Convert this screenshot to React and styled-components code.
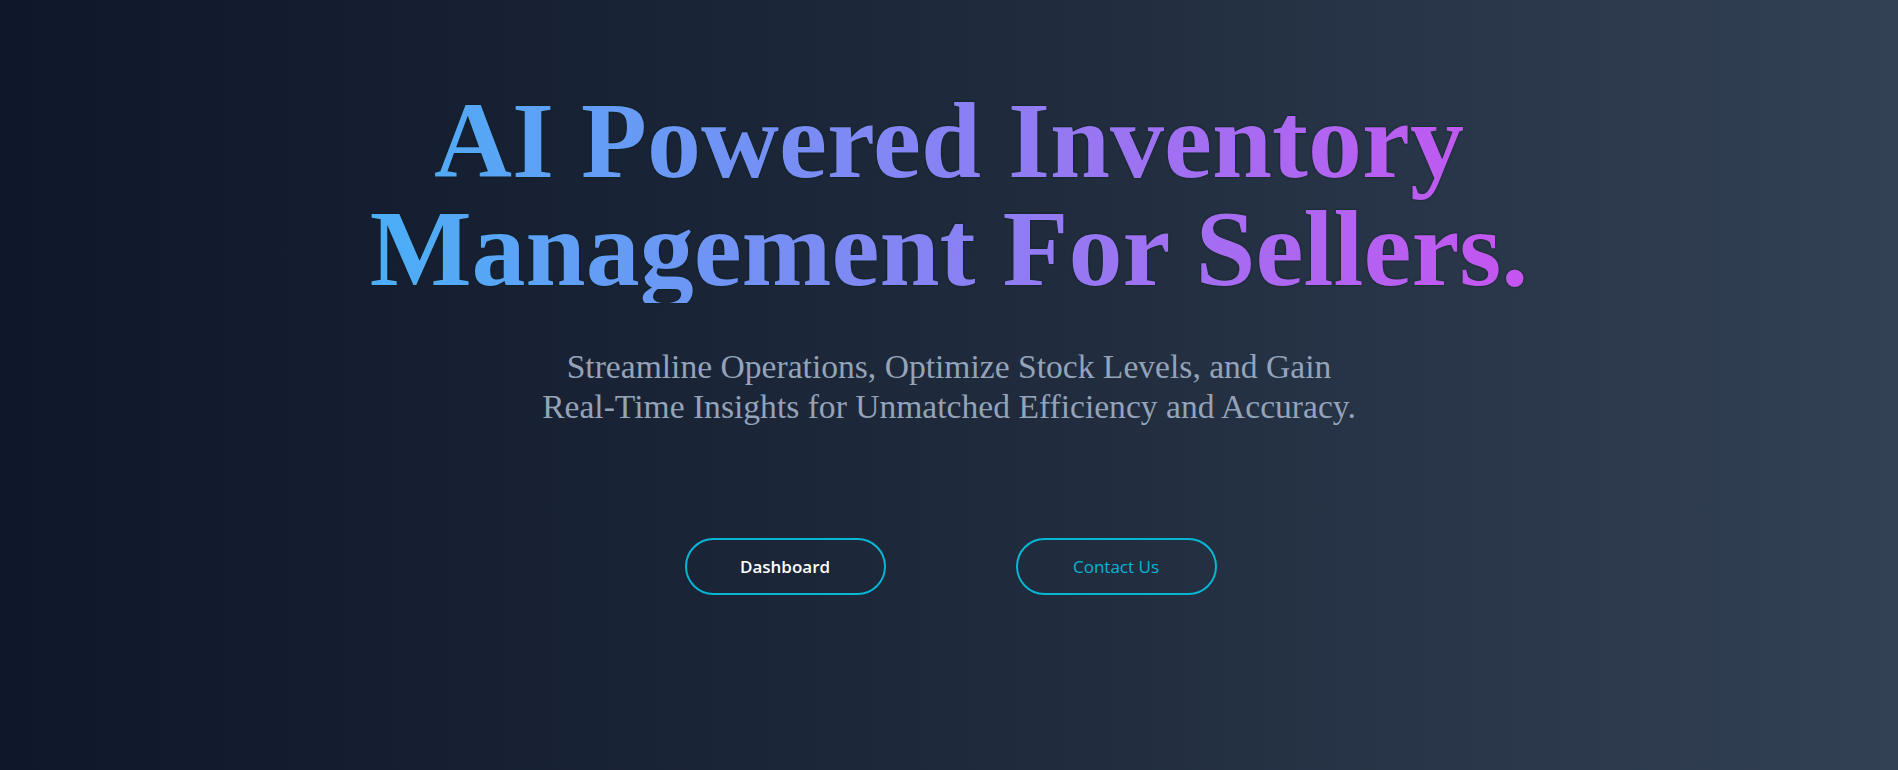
import React from "react";
import styled, { createGlobalStyle } from "styled-components";

const GlobalStyle = createGlobalStyle`
  html, body {
    margin: 0;
    padding: 0;
  }
  body {
    font-family: "Liberation Serif", "Times New Roman", serif;
    background: #0f172a;
  }
  * { box-sizing: border-box; }
`;

const Page = styled.main`
  min-height: 100vh;
  width: 100%;
  background: linear-gradient(to right, #0f172a 0%, #1e293b 50%, #334155 100%);
  display: flex;
  flex-direction: column;
  align-items: center;
  padding-top: 87px;
`;

const Heading = styled.h1`
  margin: 0;
  width: 100%;
  text-align: center;
  font-family: "Liberation Serif", "Times New Roman", serif;
  font-weight: 700;
  font-size: 108px;
  line-height: 1;
  background: linear-gradient(to right, #38bdf8 10%, #d946ef 90%);
  -webkit-background-clip: text;
  background-clip: text;
  color: transparent;
  filter: drop-shadow(0 0 1px rgba(4, 30, 20, 0.85));
`;

const Subtitle = styled.p`
  margin: 44px 0 0;
  text-align: center;
  font-family: "Liberation Serif", "Times New Roman", serif;
  font-size: 33.6px;
  line-height: 1.2;
  color: #94a3b8;
`;

const Actions = styled.div`
  margin-top: 110px;
  padding-left: 3px;
  display: flex;
  gap: 130px;
`;

const PillButton = styled.button`
  width: 201px;
  height: 57px;
  border: 2px solid #06b6d4;
  border-radius: 9999px;
  background: transparent;
  display: flex;
  align-items: center;
  justify-content: center;
  font-family: "Open Sans", "Noto Sans", sans-serif;
  font-size: 17px;
  font-weight: ${(p) => (p.$primary ? 600 : 500)};
  color: ${(p) => (p.$primary ? "#ffffff" : "#06b6d4")};
  cursor: pointer;
  padding: 0;
`;

export default function App() {
  return (
    <>
      <GlobalStyle />
      <Page>
        <Heading>
          AI Powered Inventory
          <br />
          Management For Sellers.
        </Heading>
        <Subtitle>
          Streamline Operations, Optimize Stock Levels, and Gain
          <br />
          Real-Time Insights for Unmatched Efficiency and Accuracy.
        </Subtitle>
        <Actions>
          <PillButton $primary>Dashboard</PillButton>
          <PillButton>Contact Us</PillButton>
        </Actions>
      </Page>
    </>
  );
}
